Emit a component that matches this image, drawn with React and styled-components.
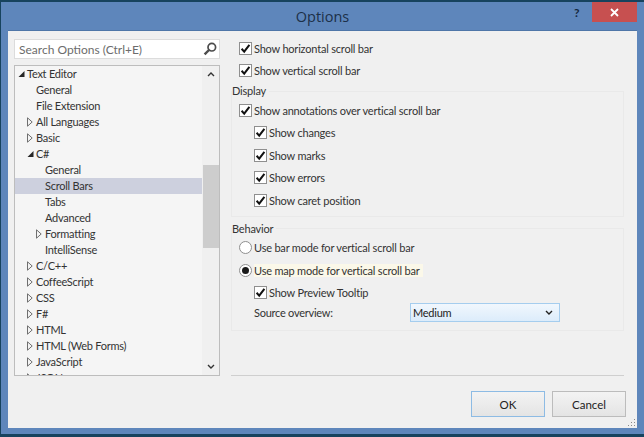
import React from 'react';
import styled, { createGlobalStyle } from 'styled-components';

const GlobalStyle = createGlobalStyle`
  html, body {
    margin: 0;
    padding: 0;
    width: 644px;
    height: 437px;
    overflow: hidden;
    background: #17435e;
  }
  body, button, select {
    font-family: Lato, "Open Sans", "Liberation Sans", sans-serif;
  }
`;

const Dialog = styled.div`
  width: 643px;
  height: 432px;
  margin: 2px 0 0 1px;
  background: #5e86bb;
  display: flex;
  flex-direction: column;
`;

const TitleBar = styled.div`
  height: 28px;
  position: relative;
  display: flex;
  align-items: center;
  justify-content: center;
  box-sizing: border-box;
`;

const Title = styled.div`
  font-family: "Open Sans", sans-serif;
  font-size: 14.5px;
  color: #1c3048;
`;

const HelpButton = styled.div`
  position: absolute;
  left: 573px;
  top: 3px;
  font-size: 12px;
  font-weight: 700;
  color: #14283f;
`;

const CloseButton = styled.div`
  position: absolute;
  left: 591px;
  top: 0;
  width: 45px;
  height: 20px;
  background: #c75050;
  display: flex;
  align-items: center;
  justify-content: center;
`;

const Client = styled.div`
  position: relative;
  height: 398px;
  margin: 0 7px 0 7px;
  box-sizing: border-box;
  background: #f0f0f0;
  border-top: 1px solid #4f76a8;
  padding: 6px 11px 0 6px;
  display: flex;
`;

const LeftColumn = styled.div`
  width: 206px;
  flex: none;
  margin-top: 2px;
  display: flex;
  flex-direction: column;
  gap: 6px;
`;

const SearchBox = styled.div`
  height: 20px;
  box-sizing: border-box;
  background: #fff;
  border: 1px solid #dcdcdc;
  padding: 0 2px 0 4px;
  display: flex;
  align-items: center;
  justify-content: space-between;
  font-size: 12px;
  color: #6c6c6c;
`;

const Tree = styled.div`
  height: 311px;
  box-sizing: border-box;
  border: 1px solid #bdbdbd;
  background: #f5f5f5;
  display: flex;
  overflow: hidden;
`;

const TreeList = styled.div`
  flex: 1;
  min-width: 0;
`;

const TreeRow = styled.div`
  height: 16px;
  box-sizing: border-box;
  position: relative;
  display: flex;
  align-items: center;
  padding: 0 0 1px ${(p) => 12 + p.$level * 9}px;
  font-size: 11px;
  letter-spacing: -0.25px;
  color: #333;
  white-space: nowrap;
  background: ${(p) => (p.$selected ? '#cdd0de' : 'transparent')};
`;

const Arrow = styled.span`
  position: absolute;
  left: ${(p) => 3 + p.$level * 9}px;
  top: 3px;
  display: flex;
`;

const ScrollBar = styled.div`
  width: 17px;
  flex: none;
  background: #f0f0f0;
  display: flex;
  flex-direction: column;
  align-items: center;
`;

const ScrollArrow = styled.div`
  height: 17px;
  display: flex;
  align-items: center;
  justify-content: center;
  margin-top: ${(p) => (p.$bottom ? 'auto' : '0')};
`;

const ScrollThumb = styled.div`
  width: 16px;
  height: 83px;
  margin-top: 82px;
  background: #cdcdcd;
`;

const RightColumn = styled.div`
  flex: 1;
  min-width: 0;
  margin-left: 11px;
  display: flex;
  flex-direction: column;
`;

const Group = styled.fieldset`
  margin: ${(p) => p.$top}px 2px 0 0;
  padding: 0 0 ${(p) => p.$bottom}px 7px;
  border: 1px solid #e9e9e9;
  min-width: 0;
`;

const Legend = styled.legend`
  padding: 0 3px 0 0;
  margin-left: -7px;
  font-size: 11px;
  letter-spacing: -0.2px;
  line-height: 16px;
  color: #333;
  background: #f0f0f0;
`;

const OptionRow = styled.label`
  height: 22.5px;
  display: flex;
  align-items: center;
  gap: 2px;
  padding-left: ${(p) => (p.$nested ? 15 : 0)}px;
  font-size: 11px;
  letter-spacing: -0.2px;
  color: #333;
  white-space: nowrap;
`;

const TopOptions = styled.div`
  padding: 0 0 1px 8px;
`;

const CheckBox = styled.span`
  width: 13px;
  height: 13px;
  flex: none;
  box-sizing: border-box;
  border: 1px solid #8f8f8f;
  background: #fff;
  display: flex;
  align-items: center;
  justify-content: center;
`;

const Radio = styled.span`
  width: 13px;
  height: 13px;
  flex: none;
  box-sizing: border-box;
  border: 1px solid #8f8f8f;
  border-radius: 50%;
  background: #fff;
  display: flex;
  align-items: center;
  justify-content: center;

  &::after {
    content: '';
    width: 7px;
    height: 7px;
    border-radius: 50%;
    background: ${(p) => (p.$on ? '#1a1a1a' : 'transparent')};
  }
`;

const Highlight = styled.span`
  background: #fbf8e9;
  padding-right: 3px;
`;

const SourceRow = styled.div`
  display: flex;
  align-items: center;
  padding-left: 15px;
  height: 17px;
  font-size: 11px;
  letter-spacing: -0.25px;
  color: #333;
`;

const SourceLabel = styled.span`
  width: 156px;
`;

const Select = styled.div`
  width: 150px;
  height: 19px;
  flex: none;
  box-sizing: border-box;
  border: 1px solid #a5cdee;
  background: linear-gradient(#f1f7fd, #dcecfb);
  padding: 0 6px 0 2px;
  display: flex;
  align-items: center;
  justify-content: space-between;
  font-size: 11px;
  color: #222;
`;

const Footer = styled.div`
  margin-top: auto;
`;

const Separator = styled.div`
  height: 1px;
  margin: 0 2px 15px 0;
  background: #cfcfcf;
`;

const Buttons = styled.div`
  display: flex;
  justify-content: flex-end;
  gap: 7px;
  margin-bottom: 11px;
`;

const Button = styled.button`
  width: 74px;
  height: 26px;
  padding: 0;
  box-sizing: border-box;
  border: 1px solid ${(p) => (p.$primary ? '#8dbbe4' : '#bcbcbc')};
  background: linear-gradient(#f3f3f3, #e4e4e4);
  font-size: 11.5px;
  color: #222;
`;

const Grip = styled.svg`
  position: absolute;
  right: 1px;
  bottom: 1px;
`;

const Collapsed = () => (
  <svg width="6" height="10" viewBox="0 0 6 10">
    <path d="M0.5 0.8 L5.2 5 L0.5 9.2 Z" fill="none" stroke="#6f6f6f" />
  </svg>
);

const Expanded = () => (
  <svg width="7" height="10" viewBox="0 0 7 10">
    <path d="M0.5 8 L6.5 8 L6.5 2 Z" fill="#262626" />
  </svg>
);

const Check = () => (
  <svg width="11" height="11" viewBox="0 0 11 11">
    <path d="M1.6 5.8 L4.2 8.6 L9.4 1.8" fill="none" stroke="#111" strokeWidth="2" />
  </svg>
);

const Chevron = ({ up, color = '#333' }) => (
  <svg width="8" height="5" viewBox="0 0 8 5">
    <path d={up ? 'M1 4 L4 1 L7 4' : 'M1 1 L4 4 L7 1'} fill="none" stroke={color} strokeWidth="1.4" />
  </svg>
);

const SearchIcon = () => (
  <svg width="14" height="14" viewBox="0 0 14 14">
    <circle cx="8.8" cy="5.2" r="3.8" fill="none" stroke="#4c4c4c" strokeWidth="1.7" />
    <path d="M6 8 L1.6 12.4" stroke="#4c4c4c" strokeWidth="2.4" />
  </svg>
);

const treeItems = [
  { label: 'Text Editor', level: 0, arrow: 'open' },
  { label: 'General', level: 1 },
  { label: 'File Extension', level: 1 },
  { label: 'All Languages', level: 1, arrow: 'closed' },
  { label: 'Basic', level: 1, arrow: 'closed' },
  { label: 'C#', level: 1, arrow: 'open' },
  { label: 'General', level: 2 },
  { label: 'Scroll Bars', level: 2, selected: true },
  { label: 'Tabs', level: 2 },
  { label: 'Advanced', level: 2 },
  { label: 'Formatting', level: 2, arrow: 'closed' },
  { label: 'IntelliSense', level: 2 },
  { label: 'C/C++', level: 1, arrow: 'closed' },
  { label: 'CoffeeScript', level: 1, arrow: 'closed' },
  { label: 'CSS', level: 1, arrow: 'closed' },
  { label: 'F#', level: 1, arrow: 'closed' },
  { label: 'HTML', level: 1, arrow: 'closed' },
  { label: 'HTML (Web Forms)', level: 1, arrow: 'closed' },
  { label: 'JavaScript', level: 1, arrow: 'closed' },
  { label: 'JSON', level: 1, arrow: 'closed' },
];

const CheckOption = ({ nested, children }) => (
  <OptionRow $nested={nested}>
    <CheckBox><Check /></CheckBox>
    {children}
  </OptionRow>
);

export default function App() {
  return (
    <>
      <GlobalStyle />
      <Dialog>
        <TitleBar>
          <Title>Options</Title>
          <HelpButton>?</HelpButton>
          <CloseButton>
            <svg width="9" height="9" viewBox="0 0 9 9">
              <path d="M1 1 L8 8 M8 1 L1 8" stroke="#fff" strokeWidth="1.8" />
            </svg>
          </CloseButton>
        </TitleBar>
        <Client>
          <LeftColumn>
            <SearchBox>
              Search Options (Ctrl+E)
              <SearchIcon />
            </SearchBox>
            <Tree>
              <TreeList>
                {treeItems.map((item, i) => (
                  <TreeRow key={i} $level={item.level} $selected={item.selected}>
                    {item.arrow && (
                      <Arrow $level={item.level}>
                        {item.arrow === 'open' ? <Expanded /> : <Collapsed />}
                      </Arrow>
                    )}
                    {item.label}
                  </TreeRow>
                ))}
              </TreeList>
              <ScrollBar>
                <ScrollArrow><Chevron up /></ScrollArrow>
                <ScrollThumb />
                <ScrollArrow $bottom><Chevron /></ScrollArrow>
              </ScrollBar>
            </Tree>
          </LeftColumn>
          <RightColumn>
            <TopOptions>
              <CheckOption>Show horizontal scroll bar</CheckOption>
              <CheckOption>Show vertical scroll bar</CheckOption>
            </TopOptions>
            <Group $top={0} $bottom={4}>
              <Legend>Display</Legend>
              <CheckOption>Show annotations over vertical scroll bar</CheckOption>
              <CheckOption nested>Show changes</CheckOption>
              <CheckOption nested>Show marks</CheckOption>
              <CheckOption nested>Show errors</CheckOption>
              <CheckOption nested>Show caret position</CheckOption>
            </Group>
            <Group $top={4} $bottom={9}>
              <Legend>Behavior</Legend>
              <OptionRow>
                <Radio />
                Use bar mode for vertical scroll bar
              </OptionRow>
              <OptionRow>
                <Radio $on />
                <Highlight>Use map mode for vertical scroll bar</Highlight>
              </OptionRow>
              <CheckOption nested>Show Preview Tooltip</CheckOption>
              <SourceRow>
                <SourceLabel>Source overview:</SourceLabel>
                <Select>
                  Medium
                  <Chevron color="#222" />
                </Select>
              </SourceRow>
            </Group>
            <Footer>
              <Separator />
              <Buttons>
                <Button $primary>OK</Button>
                <Button>Cancel</Button>
              </Buttons>
            </Footer>
          </RightColumn>
          <Grip width="8" height="8" viewBox="0 0 8 8">
            <path d="M6 0h1v1H6zM3 3h1v1H3zM6 3h1v1H6zM0 6h1v1H0zM3 6h1v1H3zM6 6h1v1H6z" fill="#8a8a8a" />
          </Grip>
        </Client>
      </Dialog>
    </>
  );
}
